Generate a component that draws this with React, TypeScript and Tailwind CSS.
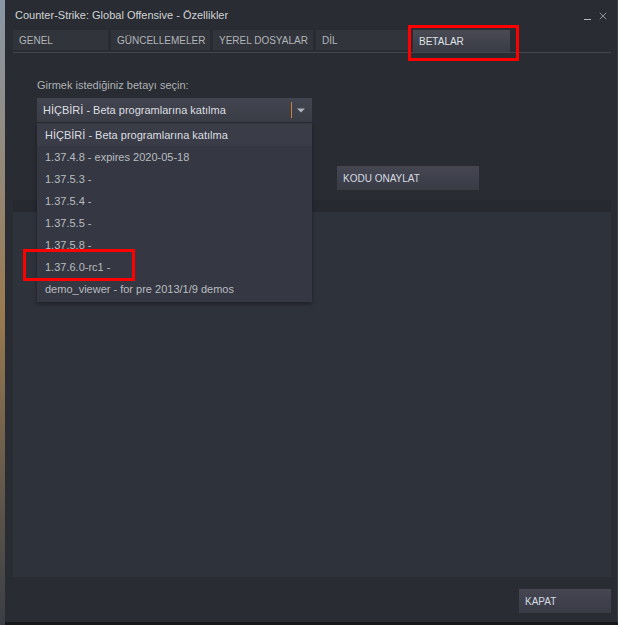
import { X } from "lucide-react";

const tabs = [
  { label: "GENEL", w: "w-[95px]" },
  { label: "GÜNCELLEMELER", w: "w-[99px]" },
  { label: "YEREL DOSYALAR", w: "w-[100px]" },
  { label: "DİL", w: "w-[94px]" },
];

const betas = [
  "HİÇBİRİ - Beta programlarına katılma",
  "1.37.4.8 - expires 2020-05-18",
  "1.37.5.3 -",
  "1.37.5.4 -",
  "1.37.5.5 -",
  "1.37.5.8 -",
  "1.37.6.0-rc1 -",
  "demo_viewer - for pre 2013/1/9 demos",
];

export default function App() {
  return (
    <div className="relative w-[618px] h-[625px] flex overflow-hidden bg-[#17181c] font-['Liberation_Sans',Arial,sans-serif]">
      {/* desktop peeking out on the left */}
      <div className="w-[5px] h-full bg-gradient-to-b from-[#8a97a6] via-[#9b7a4e] to-[#3a3e44]" />

      {/* properties window */}
      <div className="flex-1 h-[622px] flex flex-col bg-[#292c32] border-r-[1px] border-[#3a3d44]">
        {/* title bar */}
        <div className="h-[30px] flex items-center pl-[10px] pr-[8px] pt-[1px]">
          <span className="text-[11px] text-[#d2d4d6]">Counter-Strike: Global Offensive - Özellikler</span>
          <div className="ml-auto flex items-center gap-[6px] text-[#b4b7bb]">
            <div className="w-[7px] h-[1px] bg-[#b4b7bb] mt-[8px]" />
            <X className="w-[12px] h-[12px]" strokeWidth={1.5} />
          </div>
        </div>

        {/* tabs */}
        <div className="mx-[8px] mr-[6px] flex gap-[3px] border-b border-[#43464d] h-[23px]">
          {tabs.map((t) => (
            <div
              key={t.label}
              className={`${t.w} shrink-0 h-[20px] flex items-center px-[6px] bg-[#31343b] text-[10px] text-[#b2b5b9] whitespace-nowrap`}
            >
              {t.label}
            </div>
          ))}
          <div className="w-[97px] shrink-0 h-[22px] flex items-center px-[6px] bg-gradient-to-b from-[#494a54] to-[#3a3c45] text-[10px] text-[#dfe3e8]">
            BETALAR
          </div>
        </div>

        {/* content */}
        <div className="flex-1 flex flex-col">
          <div className="px-[32px] pt-[25px]">
            <div className="text-[11px] leading-[14px] text-[#aeb2b6]">Girmek istediğiniz betayı seçin:</div>

            <div className="relative mt-[6px] w-[275px] z-10">
              <div className="h-[24px] flex items-center pl-[6px] bg-gradient-to-b from-[#42444f] to-[#3a3c46] text-[11px] text-[#dcdee0]">
                <span>HİÇBİRİ - Beta programlarına katılma</span>
                <div className="ml-auto flex items-center h-full">
                  <div className="w-[1px] h-[16px] bg-[#c7813c]" />
                  <svg width="20" height="24" viewBox="0 0 20 24">
                    <path d="M5 10.5 L13 10.5 L9 14.5 Z" fill="#aeb4bb" />
                  </svg>
                </div>
              </div>
              <div className="absolute top-[25px] left-0 w-full flex flex-col pt-[1px] pb-[2px] bg-[#353842] shadow-[0_2px_4px_rgba(0,0,0,0.35)]">
                {betas.map((b, i) => (
                  <div
                    key={b}
                    className={`h-[22px] flex items-center pl-[8px] text-[11px] ${
                      i === 0 ? "bg-[#3a3d48] text-[#dcdee0]" : "text-[#b9bcc0]"
                    }`}
                  >
                    {b}
                  </div>
                ))}
              </div>
            </div>

            <div className="mt-[44px] flex items-center gap-[25px]">
              <div className="w-[275px] h-[24px] bg-[#30333b]" />
              <div className="w-[142px] h-[24px] flex items-center px-[6px] bg-gradient-to-b from-[#454652] to-[#393b45] text-[10px] text-[#d5dbe2]">
                KODU ONAYLAT
              </div>
            </div>
          </div>

          <div className="mt-[10px] ml-[8px] mr-[6px] h-[12px] bg-[#262930]" />
          <div className="ml-[8px] mr-[6px] h-[365px] bg-[#2e323b]" />

          <div className="flex justify-end mr-[6px] mt-[12px]">
            <div className="w-[92px] h-[24px] flex items-center px-[6px] bg-gradient-to-b from-[#454652] to-[#393b45] text-[10px] text-[#d5dbe2]">
              KAPAT
            </div>
          </div>
        </div>
      </div>

      {/* red annotation boxes */}
      <div className="absolute z-20 left-[408px] top-[25px] w-[111px] h-[36px] border-[3px] border-[#ff0000]" />
      <div className="absolute z-20 left-[23px] top-[249px] w-[112px] h-[32px] border-[3px] border-[#ff0000]" />
    </div>
  );
}
